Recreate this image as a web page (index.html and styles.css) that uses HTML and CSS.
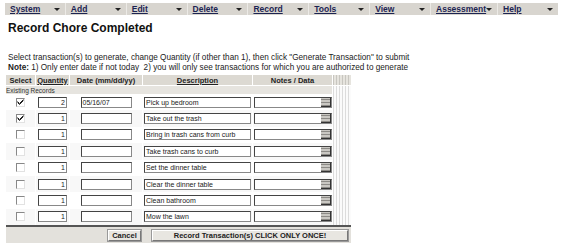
FILE: index.html
```html
<!DOCTYPE html>
<html lang="en">
<head>
  <meta charset="UTF-8">
  <title>Record Chore Completed</title>
  <link rel="stylesheet" href="styles.css">
</head>
<body>

  <!-- Top menu -->
  <div class="menu-bar">
    <div class="menu-item"><a href="#">System</a><span class="arrow"></span></div>
    <div class="menu-item"><a href="#">Add</a><span class="arrow"></span></div>
    <div class="menu-item"><a href="#">Edit</a><span class="arrow"></span></div>
    <div class="menu-item"><a href="#">Delete</a><span class="arrow"></span></div>
    <div class="menu-item"><a href="#">Record</a><span class="arrow"></span></div>
    <div class="menu-item"><a href="#">Tools</a><span class="arrow"></span></div>
    <div class="menu-item"><a href="#">View</a><span class="arrow"></span></div>
    <div class="menu-item"><a href="#">Assessment</a><span class="arrow"></span></div>
    <div class="menu-item"><a href="#">Help</a><span class="arrow"></span></div>
  </div>

  <h1 class="page-title">Record Chore Completed</h1>

  <div class="instructions">
    <p>Select transaction(s) to generate, change Quantity (if other than 1), then click "Generate Transaction" to submit</p>
    <p><b>Note:</b> 1) Only enter date if not today&nbsp; 2) you will only see transactions for which you are authorized to generate</p>
  </div>

  <table class="chore-table">
    <thead>
      <tr class="head-row">
        <th class="col-select">Select</th>
        <th class="col-qty"><u>Quantity</u></th>
        <th class="col-date">Date (mm/dd/yy)</th>
        <th class="col-desc"><u>Description</u></th>
        <th class="col-notes">Notes / Data</th>
        <th class="col-stripe"></th>
      </tr>
      <tr class="group-row">
        <td colspan="5">Existing Records</td>
        <td class="col-stripe"></td>
      </tr>
    </thead>
    <tbody id="choreRows"></tbody>
    <tfoot>
      <tr class="button-row">
        <td colspan="6">
          <div class="buttons">
            <button class="btn btn-cancel">Cancel</button>
            <button class="btn btn-record">Record Transaction(s) CLICK ONLY ONCE!</button>
          </div>
        </td>
      </tr>
    </tfoot>
  </table>

  <script>
    // Chore records
    const chores = [
      { checked: true,  qty: 2, date: "05/16/07", desc: "Pick up bedroom" },
      { checked: true,  qty: 1, date: "", desc: "Take out the trash" },
      { checked: false, qty: 1, date: "", desc: "Bring in trash cans from curb" },
      { checked: false, qty: 1, date: "", desc: "Take trash cans to curb" },
      { checked: false, qty: 1, date: "", desc: "Set the dinner table" },
      { checked: false, qty: 1, date: "", desc: "Clear the dinner table" },
      { checked: false, qty: 1, date: "", desc: "Clean bathroom" },
      { checked: false, qty: 1, date: "", desc: "Mow the lawn" }
    ];

    const tick = '<svg width="7" height="7" viewBox="0 0 7 7"><path d="M0.5 2.5 L2.5 4.5 L6.5 0.5 M0.5 3.5 L2.5 5.5 L6.5 1.5" stroke="#222" stroke-width="1" fill="none"/></svg>';

    const tbody = document.getElementById("choreRows");
    chores.forEach(chore => {
      const row = document.createElement("tr");
      row.className = "data-row";
      row.innerHTML = `
        <td class="col-select"><span class="check">${chore.checked ? tick : ""}</span></td>
        <td class="col-qty"><span class="field field-qty">${chore.qty}</span></td>
        <td class="col-date"><span class="field field-date">${chore.date}</span></td>
        <td class="col-desc"><span class="field field-desc">${chore.desc}</span></td>
        <td class="col-notes"><span class="field field-notes"><span class="notes-btn"></span></span></td>
        <td class="col-stripe"></td>
      `;
      tbody.appendChild(row);
    });
  </script>

</body>
</html>
```

FILE: styles.css
```css
/* Basic Styles */
body {
  font-family: "Liberation Sans", Arial, sans-serif;
  margin: 0;
  padding: 3px 5px 0;
  background-color: #fff;
  color: #111;
}
/* Menu */
.menu-bar {
  display: flex;
  width: 553px;
  height: 12px;
  background-color: #d8d5cf;
}
.menu-item {
  flex: 1;
  display: flex;
  align-items: center;
  justify-content: space-between;
  padding: 0 5px;
  border-left: 1px solid #eceae6;
  font-size: 8.5px;
  font-weight: bold;
}
.menu-item:first-child {
  border-left: none;
}
.menu-item a {
  color: #1c2452;
}
.arrow {
  width: 0;
  height: 0;
  border-left: 3px solid transparent;
  border-right: 3px solid transparent;
  border-top: 3px solid #222;
}
/* Title */
.page-title {
  font-size: 12px;
  margin: 6px 3px 0;
  line-height: 14px;
}
/* Instructions */
.instructions {
  margin: 18px 3px 0;
  font-size: 8.2px;
  line-height: 10px;
  color: #222;
}
.instructions p {
  margin: 0;
}
/* Table */
.chore-table {
  border-collapse: separate;
  border-spacing: 1px 0;
  margin-top: 2px;
  font-size: 7px;
}
.chore-table th, .chore-table td {
  padding: 0;
}
.head-row th {
  height: 10px;
  background-color: #dcd9d2;
  font-size: 7.5px;
  font-weight: bold;
  color: #222;
  text-align: center;
  white-space: nowrap;
  border-bottom: 1px solid #fff;
}
.col-select { width: 29px; }
.col-qty { width: 33px; }
.col-date { width: 72px; }
.col-desc { width: 109px; }
.col-notes { width: 79px; }
.col-stripe {
  width: 18px;
  background: repeating-linear-gradient(90deg, #dcdcdc 0 1px, #fbfbfb 1px 3px);
}
.head-row .col-stripe {
  background: repeating-linear-gradient(90deg, #c8c6c0 0 1px, #e6e4de 1px 3px);
}
.group-row td {
  height: 8px;
  background-color: #e6e4df;
  font-size: 6.5px;
  color: #333;
}
.data-row td {
  height: 16.4px;
  text-align: center;
}
.data-row:nth-child(even) td {
  background-color: #f8f8f8;
}
.data-row td.col-stripe {
  background: repeating-linear-gradient(90deg, #dcdcdc 0 1px, #fbfbfb 1px 3px);
}
.check {
  display: inline-flex;
  align-items: center;
  justify-content: center;
  width: 7px;
  height: 7px;
  background: #fff;
  border-top: 1px solid #888;
  border-left: 1px solid #888;
  border-right: 1px solid #e2e2e2;
  border-bottom: 1px solid #e2e2e2;
  vertical-align: middle;
}
.field {
  display: inline-block;
  box-sizing: border-box;
  height: 11px;
  line-height: 9px;
  background: #fff;
  border: 1px solid #444;
  border-right-color: #888;
  border-bottom-color: #888;
  font-size: 7px;
  color: #222;
  text-align: left;
  padding: 0 1px;
  vertical-align: middle;
  white-space: nowrap;
  overflow: hidden;
}
.field-qty {
  width: 29px;
  text-align: right;
}
.field-date { width: 51px; }
.field-desc { width: 107px; }
.field-notes {
  width: 78px;
  position: relative;
}
.notes-btn {
  position: absolute;
  right: 0;
  top: 0;
  width: 10px;
  height: 9px;
  background: repeating-linear-gradient(180deg, #c9c7c2 0 1px, #8c8a86 1px 2px, #c9c7c2 2px 3px);
  border-right: 1px solid #333;
  border-bottom: 1px solid #333;
  box-sizing: border-box;
}
/* Buttons */
.button-row td {
  border-top: 2px solid #555;
  background-color: #e3e1dc;
  height: 16px;
}
.buttons {
  display: flex;
  align-items: center;
  padding-left: 102px;
  gap: 11px;
}
.btn {
  font-family: "Liberation Sans", Arial, sans-serif;
  font-size: 7.5px;
  font-weight: bold;
  color: #222;
  background-color: #e8e6e1;
  border: 1px solid #777;
  border-top-color: #fff;
  border-left-color: #fff;
  outline: 1px solid #999;
  height: 11px;
  padding: 0;
  line-height: 9px;
}
.btn-cancel { width: 33px; }
.btn-record { width: 196px; }
```
